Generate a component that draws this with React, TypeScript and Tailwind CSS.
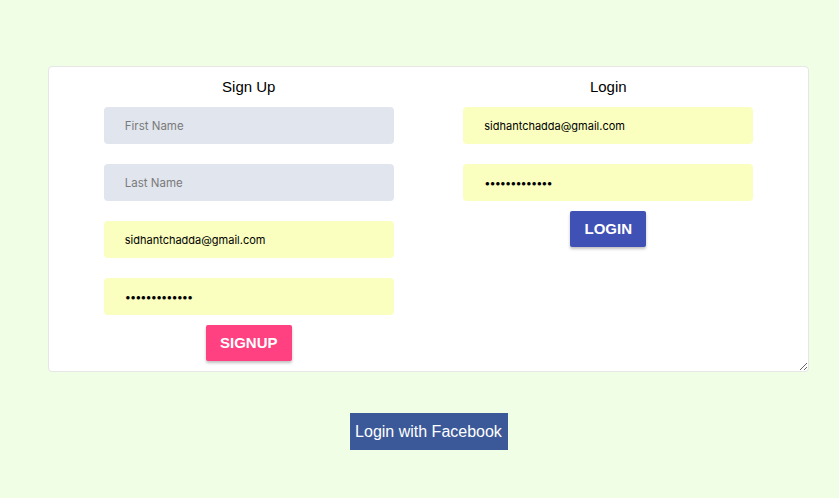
import React from "react";

const inputBase =
  "w-full h-[37px] rounded-[4px] pl-[21px] pr-3 text-[11px] text-black outline-none font-['Inter',sans-serif] placeholder:text-[#7a7a7a] placeholder:text-[11.5px]";

export default function App() {
  return (
    <div className="min-h-[498px] w-full bg-[#f1fee6] font-['Liberation_Sans',Arial,sans-serif]">
      <div className="pl-[48px] pr-[30px] pt-[66px]">
        {/* Card */}
        <div className="bg-white border border-[#e6e6e6] rounded-[4px] h-[306px] resize overflow-auto px-5">
          <div className="grid grid-cols-2">
            {/* Sign Up */}
            <div className="flex flex-col items-center">
              <h2 className="text-[15px] text-black mt-[10px] mb-[11px] leading-[19px]">Sign Up</h2>
              <div className="flex flex-col gap-[20px] w-[290px]">
                <input className={`${inputBase} bg-[#e1e5ee]`} placeholder="First Name" />
                <input className={`${inputBase} bg-[#e1e5ee]`} placeholder="Last Name" />
                <input className={`${inputBase} bg-[#fafebf]`} defaultValue="sidhantchadda@gmail.com" />
                <input
                  type="password"
                  className={`${inputBase} bg-[#fafebf] tracking-[-1px]`}
                  defaultValue="sidhantchadda"
                />
              </div>
              <button className="mt-[10px] h-[36px] w-[86px] rounded-[2px] bg-[#ff4081] text-white font-bold text-[15px] shadow-[0_2px_3px_rgba(0,0,0,0.25)]">
                SIGNUP
              </button>
            </div>

            {/* Login */}
            <div className="flex flex-col items-center">
              <h2 className="text-[15px] text-black mt-[10px] mb-[11px] leading-[19px]">Login</h2>
              <div className="flex flex-col gap-[20px] w-[290px]">
                <input className={`${inputBase} bg-[#fafebf]`} defaultValue="sidhantchadda@gmail.com" />
                <input
                  type="password"
                  className={`${inputBase} bg-[#fafebf] tracking-[-1px]`}
                  defaultValue="sidhantchadda"
                />
              </div>
              <button className="mt-[10px] h-[36px] w-[76px] rounded-[2px] bg-[#3f51b5] text-white font-bold text-[15px] shadow-[0_2px_3px_rgba(0,0,0,0.25)]">
                LOGIN
              </button>
            </div>
          </div>
        </div>

        {/* Facebook */}
        <div className="flex justify-center mt-[41px]">
          <button className="h-[37px] w-[158px] bg-[#3b5998] text-white text-[16px]">
            Login with Facebook
          </button>
        </div>
      </div>
    </div>
  );
}
